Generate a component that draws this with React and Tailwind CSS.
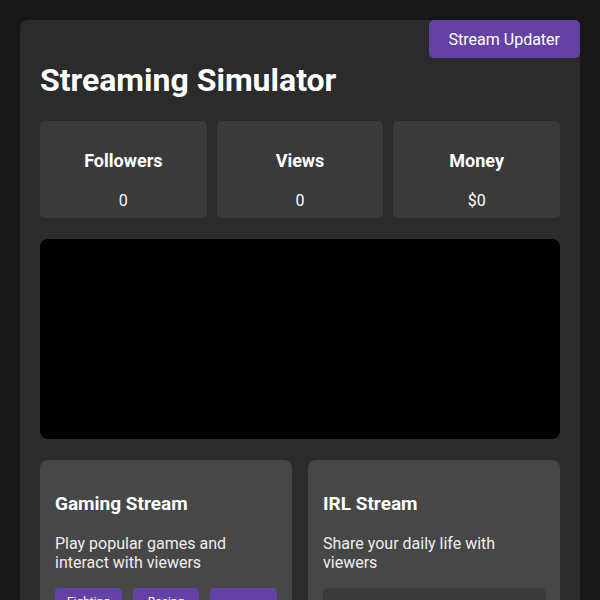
import React from 'react';

const stats = [
  { label: 'Followers', value: '0' },
  { label: 'Views', value: '0' },
  { label: 'Money', value: '$0' },
];

const StatCard = ({ label, value }) => (
  <div className="bg-[#3a3a3a] rounded-[5px] h-[97px] flex flex-col items-center pt-[29px]">
    <h3 className="text-[18px] font-bold leading-[22px] text-white">{label}</h3>
    <p className="text-[16px] leading-[20px] text-white mt-[19px]">{value}</p>
  </div>
);

const App = () => {
  return (
    <div className="min-h-screen bg-[#181818] p-5 font-['Roboto',sans-serif] text-white">
      <div className="relative bg-[#2b2b2b] rounded-[8px] px-5 pt-[40px] pb-5">
        <button className="absolute top-0 right-0 bg-[#6441a5] text-white text-[16px] leading-[20px] px-5 pt-[10px] pb-[8px] rounded-[5px]">
          Stream Updater
        </button>
        <h1 className="text-[32px] font-bold leading-[40px]">Streaming Simulator</h1>

        <div className="grid grid-cols-3 gap-[10px] mt-[21px]">
          {stats.map((s) => (
            <StatCard key={s.label} {...s} />
          ))}
        </div>

        <div className="bg-black rounded-[8px] h-[200px] mt-[21px]" />

        <div className="grid grid-cols-2 gap-4 mt-[21px]">
          <div className="bg-[#474747] rounded-[8px] px-[15px] pt-[32px] pb-5">
            <h3 className="text-[19px] font-bold leading-[24px]">Gaming Stream</h3>
            <p className="text-[16px] leading-[19px] mt-[18px] text-[#eeeeee]">
              Play popular games and interact with viewers
            </p>
            <div className="flex items-start gap-[11px] mt-[16px]">
              <span className="bg-[#6441a5] rounded-[4px] text-[12px] leading-[16px] py-[6px] w-[67px] text-center">Fighting</span>
              <span className="bg-[#6441a5] rounded-[4px] text-[12px] leading-[16px] py-[6px] w-[66px] text-center">Racing</span>
              <span className="bg-[#6441a5] rounded-[4px] text-[12px] leading-[16px] pt-[14px] pb-[6px] w-[67px] text-center">Battle Royale</span>
            </div>
          </div>
          <div className="bg-[#474747] rounded-[8px] px-[15px] pt-[32px] pb-5">
            <h3 className="text-[19px] font-bold leading-[24px]">IRL Stream</h3>
            <p className="text-[16px] leading-[19px] mt-[18px] text-[#eeeeee]">
              Share your daily life with viewers
            </p>
            <div className="bg-[#3a3a3a] rounded-[6px] h-[36px] mt-[16px] w-[223px]" />
          </div>
        </div>
      </div>
    </div>
  );
};

export default App;
